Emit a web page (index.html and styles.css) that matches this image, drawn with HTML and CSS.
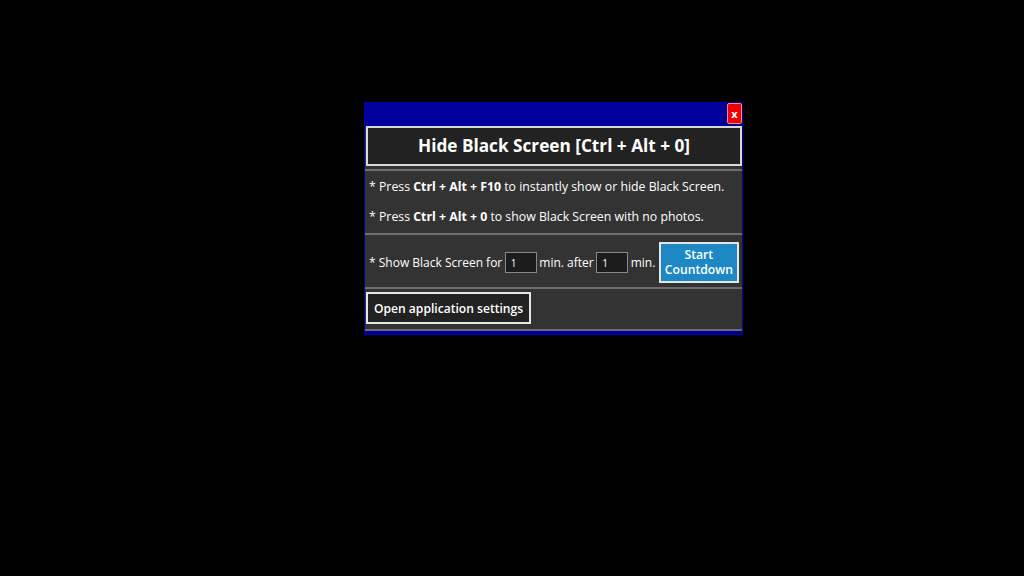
FILE: index.html
```html
<!DOCTYPE html>
<html>
<head>
<meta charset="utf-8">
<link rel="stylesheet" href="styles.css">
</head>
<body>
<div class="window">
  <div class="titlebar"><button class="close">x</button></div>
  <div class="content">
    <div class="header">Hide Black Screen [Ctrl + Alt + 0]</div>
    <div class="sep"></div>
    <div class="info">
      <p>* Press <b>Ctrl + Alt + F10</b> to instantly show or hide Black Screen.</p>
      <p>* Press <b>Ctrl + Alt + 0</b> to show Black Screen with no photos.</p>
    </div>
    <div class="sep"></div>
    <div class="timer">
      <span>* Show Black Screen for</span>
      <input class="num" type="text" value="1">
      <span>min. after</span>
      <input class="num" type="text" value="1">
      <span>min.</span>
      <button class="start">Start<br>Countdown</button>
    </div>
    <div class="sep"></div>
    <div class="settings-row">
      <button class="settings">Open application settings</button>
    </div>
    <div class="sep"></div>
  </div>
</div>
</body>
</html>
```

FILE: styles.css
```css
html, body {
  margin: 0;
  padding: 0;
  background: #000;
  height: 100%;
}
body {
  font-family: "Open Sans", "Noto Sans", sans-serif;
  color: #fff;
}
.window {
  margin-left: 364px;
  margin-top: 102px;
  width: 379px;
  background: #00009c;
  padding: 0 1px 4px 1px;
  box-sizing: border-box;
}
.titlebar {
  height: 24px;
  display: flex;
  justify-content: flex-end;
  align-items: flex-start;
  padding-top: 1px;
  box-sizing: border-box;
}
.close {
  width: 15px;
  height: 21px;
  margin: 0;
  padding: 0;
  background: #f00000;
  border: 1px solid #f08a8a;
  border-radius: 2px;
  color: #fff;
  font-family: "Open Sans", sans-serif;
  font-weight: 700;
  font-size: 11px;
  line-height: 17px;
}
.content {
  background: #333;
  display: flex;
  flex-direction: column;
}
.header {
  margin: 0 0 0 1px;
  height: 40px;
  box-sizing: border-box;
  border: 2px solid #d8d8d8;
  background: #222;
  font-weight: 700;
  font-size: 17.2px;
  display: flex;
  align-items: center;
  justify-content: center;
  padding-bottom: 2px;
}
.sep {
  height: 2px;
  background: #6e6e6e;
}
.content > .header + .sep {
  margin-top: 3px;
}
.info {
  padding: 1px 4px 1px 4px;
}
.info p {
  margin: 0;
  font-size: 12.3px;
  line-height: 30px;
  white-space: nowrap;
}
.timer {
  display: flex;
  align-items: center;
  padding: 7px 4px 4px 4px;
  font-size: 12px;
  gap: 2.5px;
  white-space: nowrap;
}
.timer > * {
  flex-shrink: 0;
}
.num {
  width: 32px;
  height: 21px;
  box-sizing: border-box;
  background: #1c1c1c;
  border: 1px solid #8a8a8a;
  color: #fff;
  font-family: "Open Sans", sans-serif;
  font-size: 10px;
  padding: 0 5px;
  margin: 0;
}
.start {
  margin-left: 1px;
  width: 80px;
  height: 41px;
  box-sizing: border-box;
  background: #1e88c4;
  border: 2px solid #e6e6e6;
  color: #fff;
  font-family: "Open Sans", sans-serif;
  font-weight: 600;
  font-size: 12.2px;
  line-height: 15px;
  padding: 0 0 2px 0;
}
.settings-row {
  padding: 3px 1px 5px 1px;
}
.settings {
  height: 32px;
  box-sizing: border-box;
  background: #222;
  border: 2px solid #e6e6e6;
  color: #fff;
  font-family: "Open Sans", sans-serif;
  font-weight: 600;
  font-size: 12.1px;
  padding: 0 6px;
  margin: 0;
  display: block;
}
```
